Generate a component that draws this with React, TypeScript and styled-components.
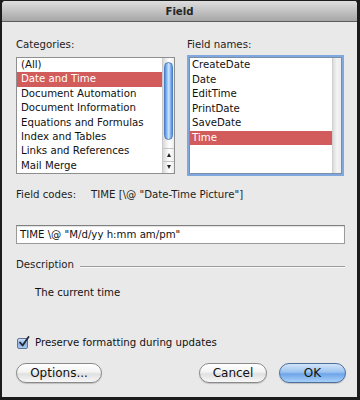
import React from 'react';
import styled, { createGlobalStyle } from 'styled-components';

const GlobalStyle = createGlobalStyle`
  html, body {
    margin: 0;
    padding: 0;
    background: #1c1c1c;
  }
  body {
    width: 360px;
    height: 400px;
    overflow: hidden;
    font-family: "DejaVu Sans", "Lucida Grande", sans-serif;
    font-size: 10.2px;
    color: #111;
  }
`;

const Window = styled.div`
  width: 360px;
  height: 400px;
  box-sizing: border-box;
  border-style: solid;
  border-color: #1c1c1c;
  border-width: 1px 3px 3px 2px;
  border-radius: 5px 5px 0 0;
  background: #e9e9e9;
  display: flex;
  flex-direction: column;
  overflow: hidden;
`;

const TitleBar = styled.div`
  height: 20px;
  flex-shrink: 0;
  border-bottom: 1px solid #5c5c5c;
  border-radius: 4px 4px 0 0;
  background: linear-gradient(#dedede, #c2c2c2 50%, #a6a6a6);
  display: flex;
  align-items: center;
  justify-content: center;
  font-weight: bold;
  color: #262626;
`;

const Content = styled.div`
  padding: 16px 12px 0 14px;
  display: flex;
  flex-direction: column;
`;

const Columns = styled.div`
  display: grid;
  grid-template-columns: 159px 153px;
  column-gap: 14px;
`;

const Column = styled.div`
  display: flex;
  flex-direction: column;
`;

const Label = styled.div<{ $shift?: number }>`
  line-height: 14px;
  height: 14px;
  margin-bottom: 5px;
  margin-left: ${p => p.$shift ?? 0}px;
  color: #1e1e1e;
`;

const ListBox = styled.div<{ $focused?: boolean }>`
  height: 117px;
  box-sizing: border-box;
  border: 1px solid ${p => (p.$focused ? '#7a8ea8' : '#8e8e8e')};
  background: #fff;
  display: flex;
  box-shadow: ${p => (p.$focused ? '0 0 0 2px #80a8df' : 'none')};
  overflow: hidden;
`;

const Rows = styled.div`
  flex: 1;
  display: flex;
  flex-direction: column;
`;

const Row = styled.div<{ $selected?: boolean; $indent: number }>`
  height: 14.5px;
  line-height: 14.5px;
  padding-left: ${p => p.$indent}px;
  white-space: nowrap;
  overflow: hidden;
  background: ${p => (p.$selected ? '#d25b5b' : 'transparent')};
  color: ${p => (p.$selected ? '#fff' : '#111')};
`;

const ScrollBar = styled.div`
  width: 11px;
  flex-shrink: 0;
  display: flex;
  flex-direction: column;
  border-left: 1px solid #c9c9c9;
  background: linear-gradient(90deg, #d9d9d9, #f4f4f4 40%, #ffffff 60%, #ebebeb);
`;

const Track = styled.div`
  flex: 1;
  padding: 4px 1px 8px 1px;
  display: flex;
  flex-direction: column;
`;

const Thumb = styled.div`
  height: 76px;
  border-radius: 5px;
  border: 1px solid #4d7fc4;
  background: linear-gradient(90deg, #4f8ee0, #9ec8f6 35%, #d4e8fc 55%, #7fb0ee 80%, #5491e2);
`;

const ArrowButton = styled.div<{ $down?: boolean }>`
  height: 13px;
  border-top: 1px solid #c4c4c4;
  display: flex;
  align-items: center;
  justify-content: center;
  &::after {
    content: '';
    width: 0;
    height: 0;
    border-left: 2.5px solid transparent;
    border-right: 2.5px solid transparent;
    ${p =>
      p.$down ? 'border-top: 4px solid #222;' : 'border-bottom: 4px solid #222;'}
  }
`;

const EmptyTrack = styled.div`
  width: 8px;
  flex-shrink: 0;
  border-left: 1px solid #cfcfcf;
  background: linear-gradient(90deg, #dcdcdc, #f3f3f3 50%, #ececec);
`;

const CodeRow = styled.div`
  margin-top: 14px;
  line-height: 14px;
  display: flex;
  color: #1e1e1e;
`;

const CodeLabel = styled.span`
  width: 75px;
`;

const TextInput = styled.div`
  margin-top: 23px;
  height: 19px;
  box-sizing: border-box;
  border: 1px solid #9a9a9a;
  border-top-color: #808080;
  background: #fff;
  padding-left: 3px;
  line-height: 17px;
  box-shadow: inset 0 1px 1px rgba(0, 0, 0, 0.12);
`;

const SectionHeader = styled.div`
  margin-top: 14px;
  line-height: 14px;
  display: flex;
  align-items: center;
  color: #1e1e1e;
`;

const Rule = styled.div`
  flex: 1;
  height: 1px;
  margin: 4px 0 0 6px;
  background: #9c9c9c;
  border-bottom: 1px solid #f8f8f8;
`;

const DescriptionText = styled.div`
  margin-top: 14px;
  padding-left: 19px;
  line-height: 14px;
`;

const CheckRow = styled.label`
  margin-top: 36px;
  line-height: 14px;
  display: flex;
  align-items: center;
  gap: 7px;
  padding-left: 1px;
`;

const CheckBox = styled.span`
  width: 11px;
  height: 11px;
  box-sizing: border-box;
  border: 1px solid #5f7392;
  border-radius: 2px;
  background: linear-gradient(#cfe1f6, #8fb3e0 50%, #a9c8ee);
  position: relative;
`;

const CheckMark = styled.svg`
  position: absolute;
  left: 0;
  top: -3px;
`;

const ButtonRow = styled.div`
  margin-top: 13px;
  display: flex;
  align-items: center;
  margin-right: -1px;
`;

const Spacer = styled.div`
  flex: 1;
`;

const Button = styled.button<{ $primary?: boolean; $width: number }>`
  width: ${p => p.$width}px;
  height: 20px;
  padding: 0;
  border-radius: 10px;
  border: 1px solid ${p => (p.$primary ? '#4d6f9c' : '#8a8a8a')};
  background: ${p =>
    p.$primary
      ? 'linear-gradient(#d3e5f9, #9cc3f0 45%, #6ea5ea 55%, #a8d0f7)'
      : 'linear-gradient(#ffffff, #f3f3f3 45%, #e0e0e0 55%, #f7f7f7)'};
  box-shadow: 0 1px 1px rgba(0, 0, 0, 0.18);
  font-family: inherit;
  font-size: 12px;
  color: #111;
  & + & {
    margin-left: 12px;
  }
`;

const categories = [
  '(All)',
  'Date and Time',
  'Document Automation',
  'Document Information',
  'Equations and Formulas',
  'Index and Tables',
  'Links and References',
  'Mail Merge',
];

const fieldNames = ['CreateDate', 'Date', 'EditTime', 'PrintDate', 'SaveDate', 'Time'];

export default function App() {
  return (
    <>
      <GlobalStyle />
      <Window>
        <TitleBar>Field</TitleBar>
        <Content>
          <Columns>
            <Column>
              <Label>Categories:</Label>
              <ListBox>
                <Rows>
                  {categories.map(c => (
                    <Row key={c} $indent={4} $selected={c === 'Date and Time'}>
                      {c}
                    </Row>
                  ))}
                </Rows>
                <ScrollBar>
                  <Track>
                    <Thumb />
                  </Track>
                  <ArrowButton />
                  <ArrowButton $down />
                </ScrollBar>
              </ListBox>
            </Column>
            <Column>
              <Label $shift={-2}>Field names:</Label>
              <ListBox $focused>
                <Rows>
                  {fieldNames.map(f => (
                    <Row key={f} $indent={2} $selected={f === 'Time'}>
                      {f}
                    </Row>
                  ))}
                </Rows>
                <EmptyTrack />
              </ListBox>
            </Column>
          </Columns>

          <CodeRow>
            <CodeLabel>Field codes:</CodeLabel>
            <span>TIME [\@ "Date-Time Picture"]</span>
          </CodeRow>

          <TextInput>TIME \@ "M/d/yy h:mm am/pm"</TextInput>

          <SectionHeader>
            Description
            <Rule />
          </SectionHeader>
          <DescriptionText>The current time</DescriptionText>

          <CheckRow>
            <CheckBox>
              <CheckMark width="12" height="12" viewBox="0 0 12 12">
                <path d="M2 6.5 L4.6 9.5 L10.5 1" fill="none" stroke="#1f2a3a" strokeWidth="1.8" strokeLinecap="round" strokeLinejoin="round" />
              </CheckMark>
            </CheckBox>
            Preserve formatting during updates
          </CheckRow>

          <ButtonRow>
            <Button $width={86}>Options...</Button>
            <Spacer />
            <Button $width={68}>Cancel</Button>
            <Button $width={67} $primary>
              OK
            </Button>
          </ButtonRow>
        </Content>
      </Window>
    </>
  );
}
